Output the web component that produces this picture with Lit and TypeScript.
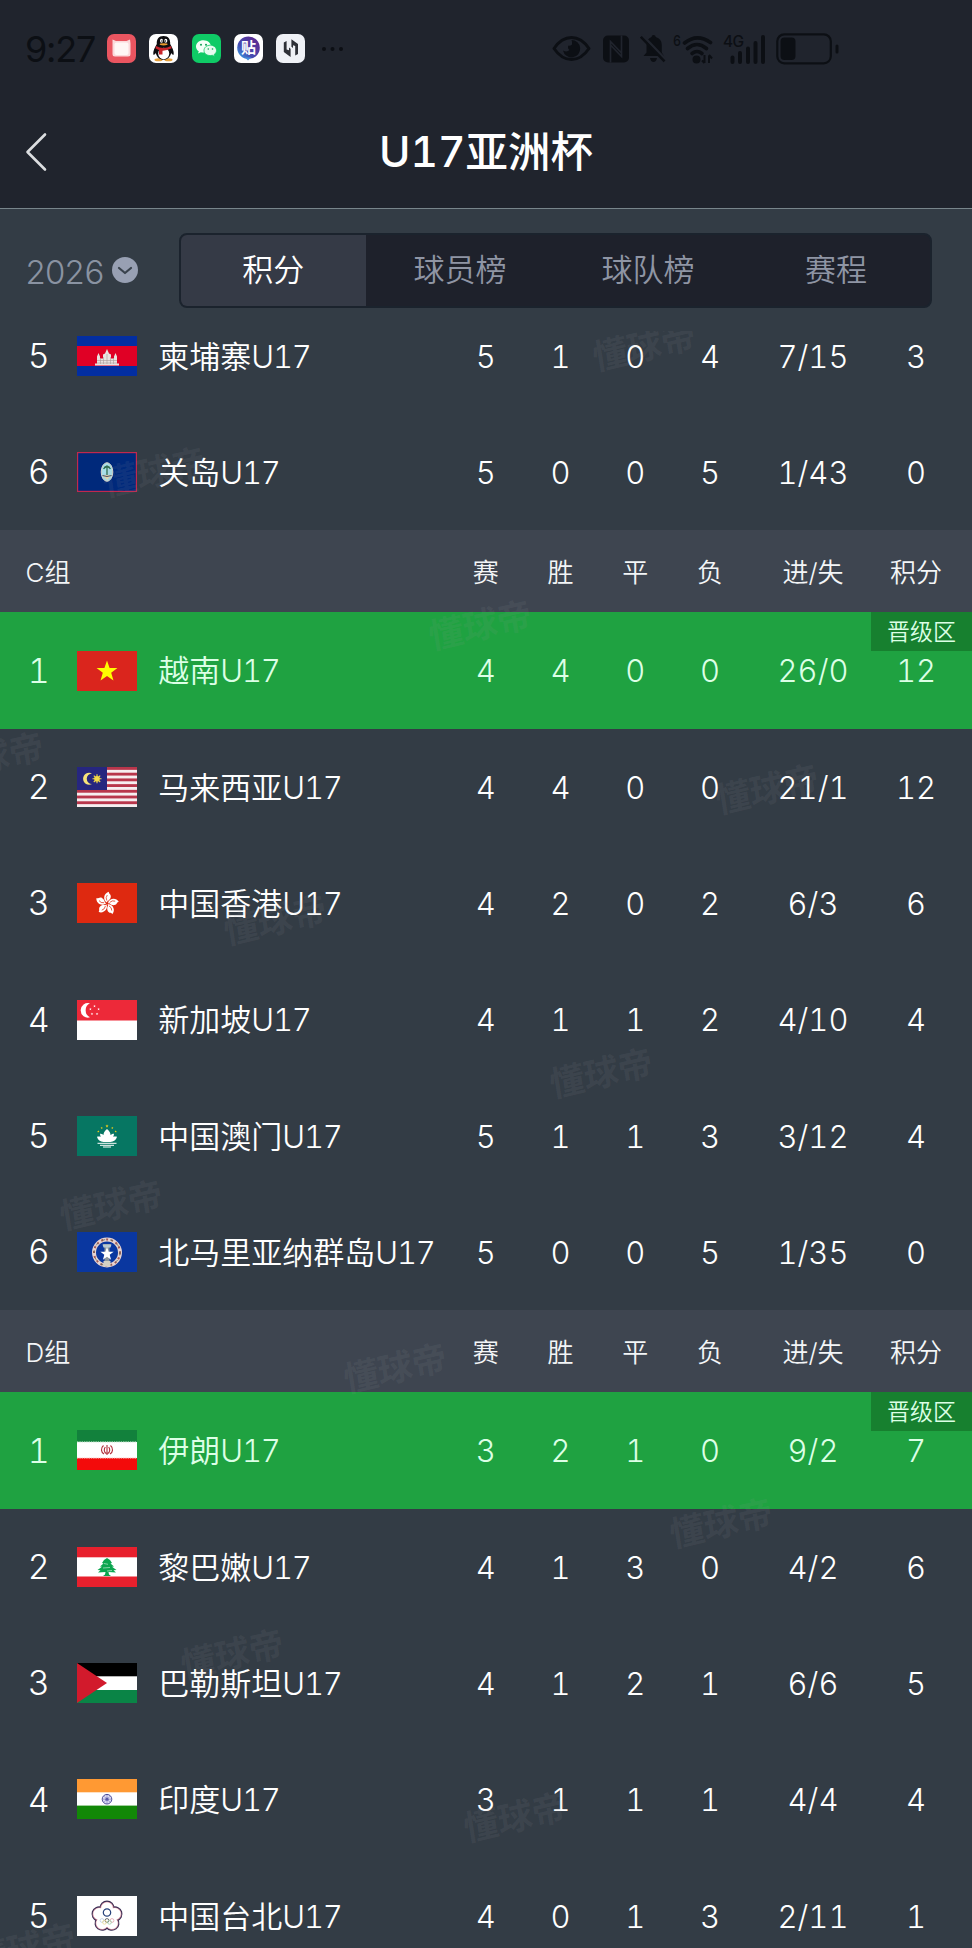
import { css, html, LitElement, svg, SVGTemplateResult } from 'lit';
import { customElement, property, state } from 'lit/decorators.js';
import { classMap } from 'lit/directives/class-map.js';

interface Team {
  rank: number;
  flag: string;
  name: string;
  stats: [number, number, number, number, string, number];
  promoted?: boolean;
}

interface Group {
  title?: string;
  teams: Team[];
}

const STAR =
  'M0 -10 L2.35 -3.24 9.51 -3.09 3.8 1.24 5.88 8.09 0 4 -5.88 8.09 -3.8 1.24 -9.51 -3.09 -2.35 -3.24Z';

const FIFTHS = [0, 72, 144, 216, 288];

const FLAGS: Record<string, SVGTemplateResult> = {
  kh: svg`
    <rect width="60" height="40" fill="#032ea1" />
    <rect y="10" width="60" height="20" fill="#e00025" />
    <path
      d="M18 29.5v-2h2v-7l1.5-3.5 1.5 3.5v2h3v-4l2-1 2-4.500 2 4.500 2 1v4h3v-2l1.500-3.500 1.500 3.500v7h2v2z"
      fill="#e9e3e0"
    />
    <path
      d="M20 24.500h20M20 27h20M26.500 21v7M30 18v10M33.500 21v7M23.500 22v6M36.500 22v6"
      stroke="#a99a98"
      stroke-width="0.6"
    />
  `,
  gu: svg`
    <rect width="60" height="40" fill="#c2284d" />
    <rect x="1.200" y="1.200" width="57.600" height="37.600" fill="#00297b" />
    <ellipse cx="30" cy="20" rx="5.800" ry="9.300" fill="#a8dfe9" stroke="#d8d3c8" />
    <path d="M25.500 23h9l-4.500 5z" fill="#e4d9b2" />
    <path d="M30 23v-8M26.500 17c2-3 5-3 7 0M27 15.500l3-1.500 3 1.500" stroke="#2c6b4c" stroke-width="1.300" fill="none" />
    <path d="M25.500 23.500q4.500 2 9 0" stroke="#4a4d60" fill="none" />
  `,
  vn: svg`
    <rect width="60" height="40" fill="#da251d" />
    <path d=${STAR} transform="translate(30 20.500) scale(1.1)" fill="#ff0" />
  `,
  my: svg`
    <rect width="60" height="40" fill="#f6eef0" />
    ${[0, 1, 2, 3, 4, 5, 6].map(
      i => svg`<rect y=${i * 5.714} width="60" height="2.857" fill="#b8364b" />`,
    )}
    <rect width="30" height="23" fill="#26267f" />
    <path d="M15 6.500a6 6 0 1 0 0 10.500a5 5 0 1 1 0-10.500z" fill="#f6e27a" />
    <circle cx="20" cy="11.800" r="2.800" fill="#fddf1c" />
    <path
      d="M20 7.300v9M15.500 11.800h9M16.800 8.600l6.400 6.400M23.200 8.600l-6.400 6.400"
      stroke="#f2d850"
      stroke-width="1.100"
    />
  `,
  hk: svg`
    <rect width="60" height="40" fill="#de2910" />
    <g transform="translate(30 20.500)">
      ${FIFTHS.map(
        angle => svg`
          <g transform="rotate(${angle})">
            <path d="M0 -1c-4.500-2.500-3.500-9.500 2-10.800c-.8 1.800 2.300 2.500 1.800 5.300c-.4 2-1.800 3.500-3.300 4z" fill="#fff" />
            <path d="M-.2 -3q-1.500-3 .5-5.500" stroke="#de2910" stroke-width="0.700" fill="none" />
          </g>
        `,
      )}
    </g>
  `,
  sg: svg`
    <rect width="60" height="40" fill="#fff" />
    <rect width="60" height="20.500" fill="#ed2939" />
    <path d="M13 3.300a7.300 7.300 0 1 0 0 14a7.800 7.800 0 0 1 0-14z" fill="#fff" />
    ${FIFTHS.map(
      angle => svg`
        <path
          d=${STAR}
          transform="translate(17.500 10.500) rotate(${angle}) translate(0 -4.300) scale(.14)"
          fill="#fff"
        />
      `,
    )}
  `,
  mo: svg`
    <rect width="60" height="40" fill="#067662" />
    <path
      d="M30 13c2.500 2 3.500 4 3.500 6c1.500-1 2.500-1.300 3.500-1.200c0 1.200-.3 2-.8 3c1.500-.5 2.600-.4 3.800 0c-.6 3-3.500 5-6.500 5.200h-7c-3-.2-5.900-2.200-6.500-5.200c1.200-.4 2.300-.5 3.800 0c-.5-1-.8-1.800-.8-3c1 0 2 .2 3.500 1.200c0-2 1-4 3.500-6z"
      fill="#fff"
    />
    <path d="M20.500 27.300h19M23 29.300h14M26 31h8" stroke="#fff" stroke-width="1" />
    <path d=${STAR} transform="translate(30 10) scale(.17)" fill="#fbd116" />
    <path d=${STAR} transform="translate(24.700 12) scale(.12)" fill="#fbd116" />
    <path d=${STAR} transform="translate(35.300 12) scale(.12)" fill="#fbd116" />
    <path d=${STAR} transform="translate(21.300 15.500) scale(.12)" fill="#fbd116" />
    <path d=${STAR} transform="translate(38.700 15.500) scale(.12)" fill="#fbd116" />
  `,
  mp: svg`
    <rect width="60" height="40" fill="#0a37a0" />
    <circle cx="30" cy="20.500" r="13" fill="none" stroke="#e6d3d2" stroke-width="4" />
    <circle
      cx="30"
      cy="20.500"
      r="13"
      fill="none"
      stroke="#a35a55"
      stroke-width="2"
      stroke-dasharray="2 3"
    />
    <circle cx="30" cy="20.500" r="13" fill="none" stroke="#5f6d5a" stroke-width="0.800" stroke-dasharray="3 5" />
    <path d="M26 12h8l-1.500 4v15h-5v-15z" fill="#8e979b" />
    <path d="M25.500 12.500h9l-1 3h-7z" fill="#b8c9d2" />
    <path d=${STAR} transform="translate(30 22) scale(.7)" fill="#fff" />
    <path d="M26.500 29h7v5.500h-7z" fill="#d4d0c4" />
  `,
  ir: svg`
    <rect width="60" height="40" fill="#fff" />
    <rect width="60" height="12" fill="#12813c" />
    <rect y="28" width="60" height="12" fill="#f30b0b" />
    <path d="M0 11.800h60" stroke="#a5d5b4" stroke-dasharray="1.500 0.800" />
    <path d="M0 28.200h60" stroke="#f9a9a4" stroke-dasharray="1.500 0.800" />
    <path
      d="M30 15v10M28.300 17c-1.500 2-1.500 5 1 6.500M31.700 17c1.500 2 1.500 5-1 6.500M26.500 15.500c-3 2.500-2.500 7 .5 8.500M33.500 15.500c3 2.500 2.500 7-.5 8.500"
      stroke="#b02c38"
      stroke-width="1.100"
      fill="none"
    />
  `,
  lb: svg`
    <rect width="60" height="40" fill="#fff" />
    <rect width="60" height="10.300" fill="#e8202d" />
    <rect y="29.500" width="60" height="10.500" fill="#e8202d" />
    <path
      d="M30 11l3 2 2 3-1.500.5 3.500 3-2 .3 4.500 3.200-3 .2 2.500 2.300-7.500-.5.5 2.500 2 1.500h-8l2-1.500.5-2.500-7.500.5 2.500-2.300-3-.2 4.500-3.200-2-.3 3.500-3-1.500-.5 2-3z"
      fill="#0ca550"
    />
    <path d="M27 16.500l4 .8M26 21l7-.5M30 24l5-.5" stroke="#d6f2e0" stroke-width="0.600" />
  `,
  ps: svg`
    <rect width="60" height="40" fill="#fff" />
    <rect width="60" height="13.300" fill="#000" />
    <rect y="27" width="60" height="13" fill="#0a8446" />
    <path d="M0 0L30 20 0 40z" fill="#d21a2c" />
  `,
  in: svg`
    <rect width="60" height="40" fill="#fff" />
    <rect width="60" height="13.300" fill="#ff9933" />
    <rect y="26.600" width="60" height="13.400" fill="#128807" />
    <circle cx="30" cy="20.200" r="4.800" fill="#dcdcf3" stroke="#3a3a8c" stroke-width="0.900" />
    <path
      d="M30 16v8.400M25.800 20.200h8.400M27 17.200l6 6M33 17.200l-6 6"
      stroke="#7a7ac0"
      stroke-width="0.600"
    />
    <circle cx="30" cy="20.200" r="1.600" fill="#5a5aa8" />
  `,
  tpe: svg`
    <rect width="60" height="40" fill="#fff" />
    <g transform="translate(30 20.500)">
      ${FIFTHS.map(
        angle => svg`<circle cy="-8.300" r="7.600" fill="#3a2f55" transform="rotate(${angle})" />`,
      )}
      ${FIFTHS.map(
        angle => svg`<circle cy="-8.300" r="6.500" fill="#d9909f" transform="rotate(${angle})" />`,
      )}
      ${FIFTHS.map(
        angle => svg`<circle cy="-8.300" r="5.900" fill="#fff" transform="rotate(${angle})" />`,
      )}
      <circle r="9.500" fill="#fff" />
      <circle cy="-4" r="3.700" fill="#fff" stroke="#243f79" stroke-width="1.200" />
      <circle cx="-5" cy="4" r="1.900" fill="none" stroke="#b9cde2" stroke-width="0.800" />
      <circle cy="4" r="1.900" fill="none" stroke="#44424a" stroke-width="0.800" />
      <circle cx="5" cy="4" r="1.900" fill="none" stroke="#e0a0aa" stroke-width="0.800" />
      <circle cx="-2.500" cy="5.800" r="1.900" fill="none" stroke="#e8da90" stroke-width="0.800" />
      <circle cx="2.500" cy="5.800" r="1.900" fill="none" stroke="#9fcfa8" stroke-width="0.800" />
    </g>
  `,
};

const AGE = 'U17';

const GROUPS: Group[] = [
  {
    teams: [
      { rank: 5, flag: 'kh', name: '柬埔寨', stats: [5, 1, 0, 4, '7/15', 3] },
      { rank: 6, flag: 'gu', name: '关岛', stats: [5, 0, 0, 5, '1/43', 0] },
    ],
  },
  {
    title: 'C组',
    teams: [
      { rank: 1, flag: 'vn', name: '越南', stats: [4, 4, 0, 0, '26/0', 12], promoted: true },
      { rank: 2, flag: 'my', name: '马来西亚', stats: [4, 4, 0, 0, '21/1', 12] },
      { rank: 3, flag: 'hk', name: '中国香港', stats: [4, 2, 0, 2, '6/3', 6] },
      { rank: 4, flag: 'sg', name: '新加坡', stats: [4, 1, 1, 2, '4/10', 4] },
      { rank: 5, flag: 'mo', name: '中国澳门', stats: [5, 1, 1, 3, '3/12', 4] },
      { rank: 6, flag: 'mp', name: '北马里亚纳群岛', stats: [5, 0, 0, 5, '1/35', 0] },
    ],
  },
  {
    title: 'D组',
    teams: [
      { rank: 1, flag: 'ir', name: '伊朗', stats: [3, 2, 1, 0, '9/2', 7], promoted: true },
      { rank: 2, flag: 'lb', name: '黎巴嫩', stats: [4, 1, 3, 0, '4/2', 6] },
      { rank: 3, flag: 'ps', name: '巴勒斯坦', stats: [4, 1, 2, 1, '6/6', 5] },
      { rank: 4, flag: 'in', name: '印度', stats: [3, 1, 1, 1, '4/4', 4] },
      { rank: 5, flag: 'tpe', name: '中国台北', stats: [4, 0, 1, 3, '2/11', 1] },
    ],
  },
];

const COLUMNS = ['赛', '胜', '平', '负', '进/失', '积分'];

const TABS = ['积分', '球员榜', '球队榜', '赛程'];

// Centres of the brand stamps, measured from the top left of the list
const STAMPS = [
  [644, 15],
  [154, 141],
  [480, 294],
  [-8, 426],
  [767, 458],
  [275, 589],
  [601, 742],
  [111, 874],
  [395, 1037],
  [721, 1192],
  [232, 1323],
  [515, 1486],
  [24, 1617],
];

@customElement('status-bar')
export class StatusBar extends LitElement {
  static override styles = css`
    :host {
      display: flex;
      align-items: center;
      height: 97px;
      padding: 0 133px 0 25px;
      box-sizing: border-box;
      color: #0c0f14;
    }

    .time {
      width: 82px;
      padding-top: 3px;
      box-sizing: border-box;
      font-size: 36px;
      font-weight: 400;
      font-variant-numeric: normal;
      letter-spacing: -1.200px;
      white-space: nowrap;
    }

    .apps {
      display: flex;
      gap: 13.300px;
    }

    .app {
      width: 29px;
      height: 29px;
      border-radius: 7px;
      overflow: hidden;
    }

    .more {
      margin-left: 16px;
    }

    .signals {
      display: flex;
      align-items: center;
      margin-left: auto;
    }

    svg {
      display: block;
    }

    .nfc {
      margin-left: 12px;
    }

    .bell {
      margin-left: 11px;
    }

    .wifi {
      margin-left: 7px;
    }

    .cell {
      margin-left: 8px;
    }

    .battery {
      margin-left: 10px;
    }

    text {
      font-family: Inter, sans-serif;
      fill: #0c0f14;
    }

    .glyph {
      font-family: 'Noto Sans CJK SC', sans-serif;
      font-weight: 700;
      fill: #fff;
    }
  `;

  override render() {
    return html`
      <div class="time">9:27</div>
      <div class="apps">
        <svg class="app" viewBox="0 0 29 29">
          <rect width="29" height="29" fill="#ea5560" />
          <path d="M5.500 5.500l3.500 1.500h10.500l3.500-1.500.5 4v10.500q0 2.500-2.500 2.500h-13q-2.500 0-2.500-2.500v-10.500z" fill="#fbd9db" />
          <rect x="7.500" y="8.500" width="14" height="12.500" rx="2" fill="#fff6f5" />
        </svg>
        <svg class="app" viewBox="0 0 29 29">
          <rect width="29" height="29" fill="#fff" />
          <ellipse cx="9.500" cy="25.800" rx="4" ry="1.500" fill="#e8a13c" />
          <ellipse cx="19.500" cy="25.800" rx="4" ry="1.500" fill="#e8a13c" />
          <path
            d="M14.500 2c-5 0-7 3.500-6.700 8c-2 3.500-4 7-3.500 10.500c.8.800 2-.5 2.500-1.500c1 4 4 6.800 7.700 6.800s6.700-2.800 7.700-6.800c.5 1 1.700 2.300 2.500 1.500c.5-3.500-1.500-7-3.500-10.500c.3-4.500-1.700-8-6.700-8z"
            fill="#0d0d10"
          />
          <ellipse cx="14.700" cy="19.500" rx="5.500" ry="5.700" fill="#fff" />
          <path d="M7 12q7.500 4 15 0l.7 2.300q-5 2.500-9.200 2.400v3.800h-3.500v-4.500q-2-.5-3.500-1.700z" fill="#c8242b" />
          <ellipse cx="12.500" cy="6.700" rx="1.500" ry="2" fill="#fff" />
          <ellipse cx="16.800" cy="6.700" rx="1.500" ry="2" fill="#fff" />
          <circle cx="12.900" cy="7" r="0.700" fill="#111" />
          <circle cx="16.400" cy="7" r="0.700" fill="#111" />
          <ellipse cx="14.600" cy="10.300" rx="4" ry="1.100" fill="#e89a2e" />
        </svg>
        <svg class="app" viewBox="0 0 29 29">
          <rect width="29" height="29" fill="#0fcb66" />
          <path
            d="M11.500 6.200c-4.200 0-7.500 2.700-7.500 6.200c0 2 1.100 3.700 2.800 4.900l-.8 2.300 2.900-1.400c.8.200 1.700.3 2.600.3c4.100 0 7.500-2.700 7.500-6.100s-3.400-6.200-7.500-6.200z"
            fill="#f4fff8"
          />
          <path
            d="M18.300 11.200c-3.500 0-6.300 2.300-6.300 5.200s2.800 5.200 6.300 5.200c.7 0 1.400-.1 2.100-.3l2.300 1.200-.6-1.900c1.500-1 2.400-2.500 2.400-4.200c0-2.900-2.700-5.200-6.200-5.200z"
            fill="#e7fbef"
            stroke="#0fcb66"
            stroke-width="0.800"
          />
          <circle cx="9" cy="10.700" r="1" fill="#0fa055" />
          <circle cx="14" cy="10.700" r="1" fill="#0fa055" />
          <circle cx="16.300" cy="15" r="0.800" fill="#0fa055" />
          <circle cx="20.500" cy="15" r="0.800" fill="#0fa055" />
        </svg>
        <svg class="app" viewBox="0 0 29 29">
          <defs>
            <linearGradient id="tie" x1="1" y1="0" x2="0" y2="1">
              <stop offset="0.200" stop-color="#5a2f96" />
              <stop offset="0.650" stop-color="#454fb4" />
              <stop offset="1" stop-color="#38b3ee" />
            </linearGradient>
          </defs>
          <rect width="29" height="29" fill="#fff" />
          <circle cx="14.500" cy="13.800" r="11.300" fill="url(#tie)" />
          <path d="M11 23.500h6l-3 3z" fill="#4790dc" />
          <text class="glyph" x="14.500" y="19.300" font-size="15" text-anchor="middle">贴</text>
        </svg>
        <svg class="app" viewBox="0 0 29 29">
          <rect width="29" height="29" fill="#eff1f6" />
          <path
            d="M7.800 8.500l2.800-1.500v8.500l2.400.8v-2.800l1.600 1.200v8.300l-6.800-5zM22 20l-2.800 1.500v-9.500l-2.200-.8v2.800l-1.600-1.200v-7.500l6.600 4.700z"
            fill="#2e3037"
          />
        </svg>
      </div>
      <svg class="more" width="24" height="6" viewBox="0 0 24 6">
        <circle cx="3" cy="3" r="2" fill="currentColor" />
        <circle cx="11.500" cy="3" r="2" fill="currentColor" />
        <circle cx="20" cy="3" r="2" fill="currentColor" />
      </svg>

      <div class="signals">
        <svg width="39" height="27" viewBox="0 0 39 27">
          <path
            d="M2 13.500q7.500-11 17.500-11t17.500 11q-7.500 11-17.500 11t-17.500-11z"
            fill="none"
            stroke="currentColor"
            stroke-width="3"
            stroke-linejoin="round"
          />
          <path
            d="M19.500 5a8.700 8.700 0 1 1-8.500 10.500q4 2 6.500-.500q-2.500-2-1-4.500q2.500.500 3.500-1q.5-2-.5-4.500z"
            fill="currentColor"
          />
        </svg>
        <svg class="nfc" width="26" height="28" viewBox="0 0 26 28">
          <rect x="0" y="0.500" width="26" height="27" rx="5" fill="currentColor" />
          <path
            d="M7.500 27.500v-21l11 11.500M18.500 .5v21l-11-11.500"
            fill="none"
            stroke="#20242d"
            stroke-width="1.700"
          />
        </svg>
        <svg class="bell" width="26" height="29" viewBox="0 0 26 29">
          <path
            d="M13.500 1q2 0 2.300 2q6 1.800 6 8v7.500l2 3.500h-20.300l3-3.500v-7.500q0-6.200 5-8q.2-2 2-2z"
            fill="currentColor"
          />
          <path d="M10 24h7q-.8 4-3.500 4t-3.500-4z" fill="currentColor" />
          <path d="M2 .8l24 25" stroke="#20242d" stroke-width="2.500" />
          <path d="M.8 2.800l23.700 24.500" stroke="currentColor" stroke-width="2.500" />
        </svg>
        <svg class="wifi" width="42" height="31" viewBox="0 0 42 31">
          <text x="0" y="13" font-size="15" font-weight="500" textLength="8" lengthAdjust="spacingAndGlyphs">6</text>
          <path d="M11.500 10q12.500-10 26-.5" fill="none" stroke="currentColor" stroke-width="3.600" stroke-linecap="round" />
          <path
            d="M14.500 15.500q9.500-8 19 0M19 20.500q5-4 10 0"
            fill="none"
            stroke="currentColor"
            stroke-width="3.600"
            stroke-linecap="round"
          />
          <circle cx="23.500" cy="26.500" r="4" fill="currentColor" />
          <path d="M31.500 22v8M29 27.500l2.500 2.500M36 30v-7.500M36 22l3 3.500" stroke="currentColor" stroke-width="2" />
        </svg>
        <svg class="cell" width="43" height="31" viewBox="0 0 43 31">
          <text x="0" y="14" font-size="15.500" font-weight="500" textLength="21">4G</text>
          <path
            d="M9.500 24.500v4.500M17 20v9M25 15.500v13.500M32.500 10v19M40 4v25"
            stroke="currentColor"
            stroke-width="4"
            stroke-linecap="round"
          />
        </svg>
        <svg class="battery" width="63" height="32" viewBox="0 0 63 32">
          <rect x="1.300" y="1.300" width="53.500" height="29" rx="7" fill="none" stroke="currentColor" stroke-width="2.200" />
          <rect x="4.500" y="4.500" width="15" height="22.500" rx="4" fill="currentColor" />
          <rect x="59.500" y="11.500" width="3" height="9" rx="1.500" fill="currentColor" />
        </svg>
      </div>
    `;
  }
}

@customElement('group-table')
export class GroupTable extends LitElement {
  static override styles = css`
    :host {
      display: block;
    }

    .line {
      display: grid;
      grid-template-columns: 77.300px 81px 1fr repeat(4, 74.750px) 131px 75px;
      align-items: center;
      padding-right: 18.500px;
      box-sizing: border-box;
      text-align: center;
      white-space: nowrap;
    }

    .line--head {
      height: 82px;
      padding-top: 3px;
      background-color: #3e4550;
      color: #f3f5f7;
      font-size: 26px;
    }

    .line--team {
      position: relative;
      height: 116.330px;
      font-size: 31px;
    }

    .line--promoted {
      background-color: #1fa241;
      color: #dcffe6;
    }

    .title {
      grid-column: 1 / 4;
      padding-left: 25.500px;
      text-align: left;
    }

    .rank,
    .name,
    .stat {
      padding-top: 1px;
    }

    .rank {
      font-size: 34px;
    }

    .flag {
      display: block;
      width: 60px;
      height: 40px;
    }

    .name {
      text-align: left;
    }

    .age {
      letter-spacing: -1.200px;
    }

    .badge {
      position: absolute;
      top: 0;
      right: 0;
      width: 101px;
      height: 39px;
      line-height: 41px;
      background-color: #17802f;
      font-size: 23px;
    }
  `;

  @property({ type: Object })
  group!: Group;

  private renderTeam(team: Team) {
    return html`
      <div class=${classMap({ line: true, 'line--team': true, 'line--promoted': !!team.promoted })}>
        <span class="rank">${team.rank}</span>
        <svg class="flag" viewBox="0 0 60 40">${FLAGS[team.flag]}</svg>
        <span class="name">${team.name}<span class="age">${AGE}</span></span>
        ${team.stats.map(value => html`<span class="stat">${value}</span>`)}
        ${team.promoted ? html`<span class="badge">晋级区</span>` : ''}
      </div>
    `;
  }

  override render() {
    return html`
      ${this.group.title
        ? html`
            <div class="line line--head">
              <span class="title">${this.group.title}</span>
              ${COLUMNS.map(column => html`<span>${column}</span>`)}
            </div>
          `
        : ''}
      ${this.group.teams.map(team => this.renderTeam(team))}
    `;
  }
}

@customElement('app-root')
export class AppRoot extends LitElement {
  static override styles = css`
    :host {
      display: flex;
      flex-direction: column;
      height: 1948px;
      overflow: hidden;
      background-color: #333c45;
      color: #fff;
      font-family: Inter, 'Noto Sans CJK SC', sans-serif;
      font-weight: 350;
      font-variant-numeric: tabular-nums;
      line-height: 1.2;
    }

    .top {
      flex: none;
      height: 208px;
      background-color: #20242d;
      border-bottom: 1px solid #78858b;
    }

    .nav {
      display: grid;
      grid-template-columns: 80px 1fr 80px;
      align-items: center;
      height: 109px;
    }

    .back {
      margin-left: 25px;
    }

    .heading {
      margin: 0;
      font-size: 42.500px;
      font-weight: 450;
      text-align: center;
    }

    .filters {
      flex: none;
      display: flex;
      align-items: flex-start;
      height: 122px;
      padding: 24px 40px 0 25px;
      box-sizing: border-box;
    }

    .season {
      display: flex;
      align-items: center;
      gap: 9px;
      width: 153.500px;
      height: 79px;
      color: #8a93a2;
      font-size: 33px;
      letter-spacing: -1.800px;
    }

    .season svg {
      margin-top: -5px;
    }

    .tabs {
      flex: 1;
      display: grid;
      grid-template-columns: 185.500px repeat(3, 1fr);
      height: 74.500px;
      box-sizing: border-box;
      border: 2px solid #1b232d;
      border-radius: 8px;
      overflow: hidden;
      background-color: #1e212b;
    }

    .tab {
      padding: 0 0 2px;
      border: none;
      background: none;
      color: #8f95a4;
      font: inherit;
      font-size: 31px;
    }

    .tab--active {
      background-color: #353a46;
      color: #fff;
    }

    .list {
      position: relative;
      flex: 1;
      min-height: 0;
      overflow: hidden;
    }

    .scroller {
      margin-top: -33.300px;
    }

    .stamp {
      position: absolute;
      color: rgba(150, 155, 160, 0.11);
      font-size: 35px;
      font-weight: 700;
      white-space: nowrap;
      transform: translate(-50%, -50%) rotate(-13deg) skewX(-4deg);
      pointer-events: none;
    }
  `;

  @state()
  private tab = 0;

  override render() {
    return html`
      <header class="top">
        <status-bar></status-bar>
        <div class="nav">
          <svg class="back" width="24" height="40" viewBox="0 0 24 40">
            <path
              d="M20 2.500L2.500 20 20 37.500"
              fill="none"
              stroke="#dcdee0"
              stroke-width="2.600"
              stroke-linecap="round"
              stroke-linejoin="round"
            />
          </svg>
          <h1 class="heading">U17亚洲杯</h1>
        </div>
      </header>

      <div class="filters">
        <div class="season">
          <span>2026</span>
          <svg width="26" height="26" viewBox="0 0 26 26">
            <circle cx="13" cy="13" r="13" fill="#98a0b3" />
            <path
              d="M7 11l6 5 6-5"
              fill="none"
              stroke="#39424c"
              stroke-width="2.200"
              stroke-linecap="round"
              stroke-linejoin="round"
            />
          </svg>
        </div>
        <div class="tabs">
          ${TABS.map(
            (label, i) => html`
              <button
                class=${classMap({ tab: true, 'tab--active': i === this.tab })}
                @click=${() => (this.tab = i)}
              >
                ${label}
              </button>
            `,
          )}
        </div>
      </div>

      <main class="list">
        <div class="scroller">
          ${GROUPS.map(group => html`<group-table .group=${group}></group-table>`)}
        </div>
        ${STAMPS.map(
          ([x, y]) => html`<span class="stamp" style="left: ${x}px; top: ${y}px">懂球帝</span>`,
        )}
      </main>
    `;
  }
}
